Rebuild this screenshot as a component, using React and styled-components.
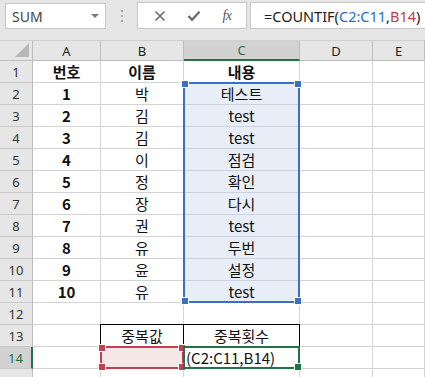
import React from "react";
import styled, { createGlobalStyle } from "styled-components";

const GlobalStyle = createGlobalStyle`
  html, body { margin: 0; padding: 0; background: #ffffff; overflow: hidden; }
  body { font-family: "Noto Sans", "Noto Sans CJK KR", sans-serif; }
`;

const COLS = [33, 68, 83, 116, 73, 52];
const HEAD_H = 21;
const ROW_H = 22;
const KR = `"Noto Sans CJK KR", "Noto Sans", sans-serif`;

const rows = [
  ["번호", "이름", "내용"],
  ["1", "박", "테스트"],
  ["2", "김", "test"],
  ["3", "김", "test"],
  ["4", "이", "점검"],
  ["5", "정", "확인"],
  ["6", "장", "다시"],
  ["7", "권", "test"],
  ["8", "유", "두번"],
  ["9", "윤", "설정"],
  ["10", "유", "test"],
  ["", "", ""],
  ["", "중복값", "중복횟수"],
  ["", "", ""],
  ["", "", ""],
];

const Page = styled.div`
  width: 425px;
  height: 377px;
  overflow: hidden;
  background: #ffffff;
`;

const Toolbar = styled.div`
  height: 40px;
  background: #e6e6e6;
  display: flex;
  align-items: flex-start;
  padding-top: 3px;
  box-sizing: border-box;
  & > * { flex-shrink: 0; }
`;

const NameBox = styled.div`
  margin-left: 5px;
  width: 101px;
  height: 26px;
  box-sizing: border-box;
  background: #fff;
  border: 1px solid #c6c6c6;
  display: flex;
  align-items: center;
  justify-content: space-between;
  padding: 0 6px 0 6px;
  font-family: "Noto Sans", sans-serif;
  font-size: 14px;
  color: #444;
`;

const Caret = styled.span`
  width: 0;
  height: 0;
  border-left: 4px solid transparent;
  border-right: 4px solid transparent;
  border-top: 4px solid #7a7a7a;
`;

const Dots = styled.div`
  width: 31px;
  height: 26px;
  display: flex;
  flex-direction: column;
  align-items: center;
  justify-content: center;
  gap: 3px;
  span {
    width: 2px;
    height: 2px;
    background: #a8a8a8;
  }
`;

const FxBox = styled.div`
  width: 110px;
  height: 27px;
  box-sizing: border-box;
  margin-top: -1px;
  background: #fff;
  border: 1px solid #c6c6c6;
  display: flex;
  align-items: center;
  justify-content: space-around;
  padding: 0 4px 0 6px;
  color: #6a6a6a;
`;

const FxLabel = styled.span`
  font-family: "Liberation Serif", serif;
  font-style: italic;
  font-size: 14px;
  color: #555;
  letter-spacing: -0.5px;
`;

const FormulaBar = styled.div`
  margin-left: 3px;
  flex: 1 1 auto !important;
  min-width: 0;
  overflow: hidden;
  height: 27px;
  margin-top: -1px;
  box-sizing: border-box;
  background: #fff;
  border: 1px solid #c6c6c6;
  border-right: none;
  display: flex;
  align-items: center;
  padding-left: 13px;
  font-family: "Noto Sans", sans-serif;
  font-size: 14.5px;
  color: #222;
  white-space: nowrap;
`;

const Ref = styled.span`
  color: ${(p) => p.$color};
`;

const Grid = styled.div`
  position: relative;
  display: grid;
  grid-template-columns: ${COLS.map((c) => c + "px").join(" ")};
  grid-template-rows: ${HEAD_H}px repeat(15, ${ROW_H}px);
`;

const ColHead = styled.div`
  box-sizing: border-box;
  background: ${(p) => (p.$active ? "#d2d2d2" : "#e6e6e6")};
  border-top: 1px solid #d0d0d0;
  border-right: 1px solid #bdbdbd;
  border-bottom: ${(p) => (p.$active ? "2px solid #217346" : "1px solid #bdbdbd")};
  display: flex;
  align-items: center;
  justify-content: center;
  font-family: "Noto Sans", sans-serif;
  font-size: 13px;
  color: ${(p) => (p.$active ? "#217346" : "#222")};
`;

const Corner = styled(ColHead)`
  position: relative;
  &::after {
    content: "";
    position: absolute;
    right: 3px;
    bottom: 3px;
    width: 0;
    height: 0;
    border-left: 14px solid transparent;
    border-bottom: 14px solid #b8b8b8;
  }
`;

const RowHead = styled.div`
  box-sizing: border-box;
  background: ${(p) => (p.$active ? "#d2d2d2" : "#e6e6e6")};
  border-right: ${(p) => (p.$active ? "2px solid #217346" : "1px solid #bdbdbd")};
  border-bottom: 1px solid #c8c8c8;
  display: flex;
  align-items: center;
  justify-content: center;
  font-family: "Noto Sans", sans-serif;
  font-size: 13px;
  color: ${(p) => (p.$active ? "#217346" : "#333")};
`;

const Cell = styled.div`
  box-sizing: border-box;
  background: ${(p) => p.$bg || "#ffffff"};
  border-right: 1px solid ${(p) => (p.$boxed ? "#000" : p.$bg ? "#c9d2de" : "#d4d4d4")};
  border-bottom: 1px solid ${(p) => (p.$boxed ? "#000" : p.$bg ? "#c9d2de" : "#d4d4d4")};
  border-top: ${(p) => (p.$boxTop ? "1px solid #000" : "none")};
  border-left: ${(p) => (p.$boxLeft ? "1px solid #000" : "none")};
  margin-top: ${(p) => (p.$boxTop ? "-1px" : "0")};
  margin-left: ${(p) => (p.$boxLeft ? "-1px" : "0")};
  display: flex;
  align-items: center;
  justify-content: ${(p) => (p.$left ? "flex-start" : "center")};
  padding-left: ${(p) => (p.$left ? "2px" : "0")};
  overflow: hidden;
  white-space: nowrap;
  font-family: ${KR};
  font-size: 15px;
  font-weight: ${(p) => (p.$bold ? 700 : 400)};
  color: #111;
`;

const Frame = styled.div`
  position: absolute;
  box-sizing: border-box;
  border: 2px solid ${(p) => p.$color};
  pointer-events: none;
`;

const Handle = styled.span`
  position: absolute;
  width: 6px;
  height: 6px;
  background: ${(p) => p.$color};
  border: 1px solid #fff;
  ${(p) => (p.$top ? "top: -4px;" : "bottom: -4px;")}
  ${(p) => (p.$lft ? "left: -4px;" : "right: -4px;")}
`;

const colX = (i) => COLS.slice(0, i).reduce((a, b) => a + b, 0);
const rowY = (r) => HEAD_H + (r - 1) * ROW_H;

const Selection = ({ c1, c2, r1, r2, color, corners }) => (
  <Frame
    $color={color}
    style={{
      left: colX(c1) - 1,
      top: rowY(r1) - 1,
      width: colX(c2 + 1) - colX(c1) + 1,
      height: rowY(r2 + 1) - rowY(r1) + 1,
    }}
  >
    {corners.map((k) => (
      <Handle key={k} $color={color} $top={k[0] === "t"} $lft={k[1] === "l"} />
    ))}
  </Frame>
);

const X = () => (
  <svg width="12" height="12" viewBox="0 0 12 12">
    <path d="M1.5 1.5 L10.5 10.5 M10.5 1.5 L1.5 10.5" stroke="#6a6a6a" strokeWidth="1.6" />
  </svg>
);

const Check = () => (
  <svg width="14" height="12" viewBox="0 0 14 12">
    <path d="M1.5 6 L5 9.8 L12.5 1.8" stroke="#6a6a6a" strokeWidth="2.2" fill="none" />
  </svg>
);

export default function App() {
  return (
    <Page>
      <GlobalStyle />
      <Toolbar>
        <NameBox>
          SUM <Caret />
        </NameBox>
        <Dots>
          <span />
          <span />
          <span />
        </Dots>
        <FxBox>
          <X />
          <Check />
          <FxLabel>fx</FxLabel>
        </FxBox>
        <FormulaBar>
          =COUNTIF(<Ref $color="#2f6ac4">C2:C11</Ref>,<Ref $color="#c23a48">B14</Ref>)
        </FormulaBar>
      </Toolbar>
      <Grid>
        <Corner />
        {["A", "B", "C", "D", "E"].map((l) => (
          <ColHead key={l} $active={l === "C"}>
            {l}
          </ColHead>
        ))}
        {rows.map((r, i) => {
          const n = i + 1;
          return (
            <React.Fragment key={n}>
              <RowHead $active={n === 14}>{n <= 14 ? n : ""}</RowHead>
              <Cell $bold={n === 1 || (n <= 11 && r[0] !== "")}>{r[0]}</Cell>
              <Cell
                $bold={n === 1}
                $boxed={n === 13 || n === 14}
                $boxTop={n === 13}
                $boxLeft={n === 13 || n === 14}
                $bg={n === 14 ? "#f8e7e8" : undefined}
              >
                {r[1]}
              </Cell>
              <Cell
                $bold={n === 1}
                $boxed={n === 13 || n === 14}
                $boxTop={n === 13}
                $bg={n >= 2 && n <= 11 ? "#e8eef8" : undefined}
                $left={n === 14}
              >
                {n === 14 ? "(C2:C11,B14)" : r[2]}
              </Cell>
              <Cell />
              <Cell />
            </React.Fragment>
          );
        })}
        <Selection c1={3} c2={3} r1={2} r2={11} color="#3a6fc4" corners={["tl", "tr", "bl", "br"]} />
        <Selection c1={2} c2={2} r1={14} r2={14} color="#c1414e" corners={["tl", "tr", "bl", "br"]} />
        <Selection c1={3} c2={3} r1={14} r2={14} color="#217346" corners={["br"]} />
      </Grid>
    </Page>
  );
}
